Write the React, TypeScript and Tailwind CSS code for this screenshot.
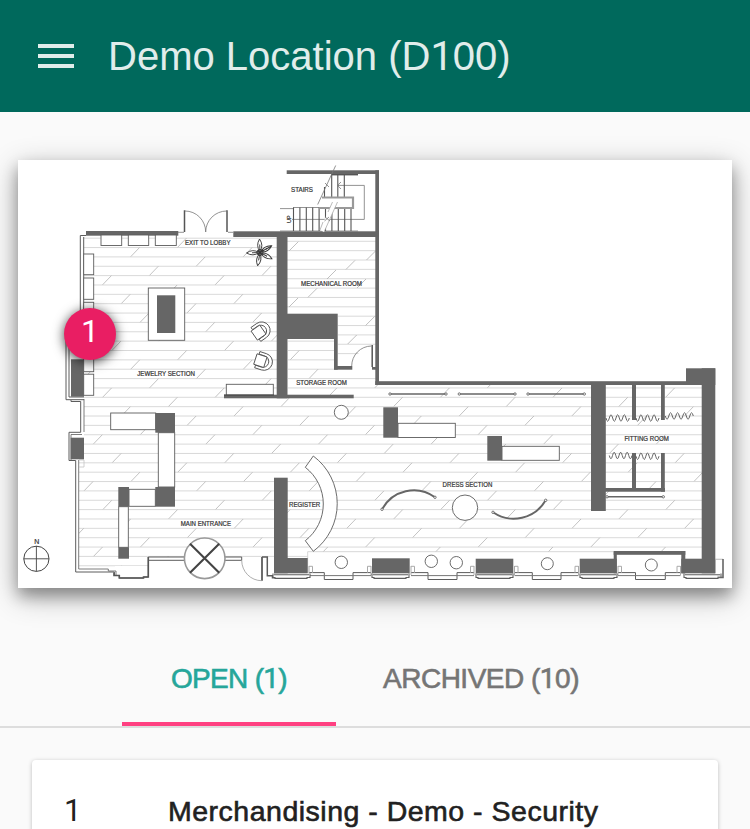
import React from "react";

const WALL = "#666666";
const LINE = "#5c5c5c";

type Box = [number, number, number, number];

// x1, y1, x2, y2
const walls: Box[] = [
  [86, 231, 178.3, 235.7],
  [286.7, 170.3, 379, 174],
  [375.3, 170.3, 379, 385],
  [233.3, 231.3, 379, 237],
  [276.7, 237, 287.5, 398.3],
  [287, 313.7, 337.7, 339],
  [334, 339, 337.7, 369.7],
  [334, 366, 352.3, 369.7],
  [372, 367, 376, 369.7],
  [224, 394.7, 353.7, 398.3],
  [375.3, 381.2, 687, 385],
  [686, 368.3, 715.3, 385],
  [701.7, 368.3, 715.3, 573.3],
  [681.3, 558.7, 715.3, 573.3],
  [613.7, 551, 685.3, 554.8],
  [613.7, 551, 616.8, 573.3],
  [681.3, 551, 685.3, 573.3],
  [579.7, 558.7, 616.7, 573.3],
  [591, 384, 605.8, 511],
  [632, 384, 636, 420],
  [661, 384, 664.8, 420],
  [632, 453, 636, 489],
  [661, 453, 664.8, 491.7],
  [605, 488, 665, 491.7],
  [274, 477.7, 287.7, 573.3],
  [274, 558, 307.7, 573.3],
  [372, 558.3, 409.7, 573.3],
  [475.7, 558.7, 513.3, 573.5],
  [71, 359.3, 84, 396.7],
  [70.7, 437.7, 84, 459.3],
];

const furniture: Box[] = [
  [101, 235, 121.7, 245.5],
  [128.3, 235, 148.7, 245.5],
  [155.3, 235, 176.3, 245.5],
  [83.7, 254, 93.7, 274.7],
  [83.7, 278, 93.7, 299.3],
  [83.7, 302.3, 93.7, 323],
  [83.7, 350, 93.7, 371.7],
  [83.7, 374.2, 93.7, 395.3],
  [148.3, 288, 184.7, 340.3],
  [226.3, 384.3, 273.3, 395],
  [110.7, 413, 155.7, 429.7],
  [158.3, 432.7, 174.7, 487],
  [129, 489.3, 155.3, 506.3],
  [118.7, 506.7, 128.3, 547.3],
  [398, 423.3, 455.3, 437.5],
  [502, 446.3, 559.3, 460.3],
];

const blocks: Box[] = [
  [157, 295.3, 175.3, 333],
  [155.3, 413, 175, 432.7],
  [155.3, 487, 175, 506.7],
  [118.3, 487, 129, 506.7],
  [118.3, 547.3, 129, 558.7],
  [383.3, 407.3, 398, 437.7],
  [487.3, 436, 502, 460.7],
];

const circles: [number, number, number][] = [
  [341.3, 412.3, 7],
  [465, 507.7, 12.7],
  [341.3, 562.3, 6.2],
  [431.3, 561.3, 6.2],
  [456.3, 562.7, 6.2],
  [547.3, 563.7, 6],
  [651.3, 565, 6],
];

const rods: [number, number, number][] = [
  [390, 446, 394],
  [459.3, 515, 394],
  [528, 584.3, 394],
  [607, 663.3, 496.8],
];

// x start, baseline, width, text
const labels: [number, number, number, string][] = [
  [291, 191.7, 22, "STAIRS"],
  [185, 244.6, 45.5, "EXIT TO LOBBY"],
  [301, 285.8, 61, "MECHANICAL ROOM"],
  [137.3, 375.6, 57.7, "JEWELRY SECTION"],
  [296.3, 385, 50.5, "STORAGE ROOM"],
  [180.8, 525.5, 50.2, "MAIN ENTRANCE"],
  [289, 507, 31.3, "REGISTER"],
  [442.6, 487.3, 49.7, "DRESS SECTION"],
  [624.4, 441.4, 44.4, "FITTING ROOM"],
];

const ROW = 9.36;
const rows = Array.from({ length: 36 }, (_, i) => i - 17);

function slashStart(row: number) {
  const period = 112.6;
  const x = 168.3 - row * 46.9;
  return ((x % period) + period) % period;
}

function Rects({ items, fill }: { items: Box[]; fill: string }) {
  return (
    <>
      {items.map(([a, b, c, d], i) => (
        <rect key={i} x={a} y={b} width={c - a} height={d - b} fill={fill} />
      ))}
    </>
  );
}

function wave(x1: number, x2: number, y: number, n: number) {
  const s = (x2 - x1) / n;
  let d = `M${x1} ${y - 1.5}`;
  for (let i = 0; i < n; i++) {
    const dy = i % 2 ? -6.5 : 6.5;
    d += ` q${s / 2} ${dy} ${s} 0`;
  }
  return d;
}

function Chair({ x, y, turn }: { x: number; y: number; turn: number }) {
  return (
    <g transform={`translate(${x} ${y}) rotate(${turn})`} fill="#fff" stroke="#555" strokeWidth={0.9}>
      <path d="M-6 -8.5 H1 A8.5 8.5 0 0 1 1 8.5 H-6 V5.8 H0 A5.8 5.8 0 0 0 0 -5.8 H-6 Z" />
      <rect x={-8} y={-5.5} width={10.5} height={11} />
    </g>
  );
}

function WindowBay({ x1, x2, from, to }: { x1: number; x2: number; from: number; to: number }) {
  return (
    <g fill="none" stroke={LINE} strokeWidth={1}>
      <path d={`M${from} 572.6 H${x1} V579.5 H${x2} V572.6 H${to}`} />
      <path d={`M${from} 575.6 H${to}`} stroke="#777" />
      <path d={`M${from} 566.3 h3.5 v6.5 M${to} 566.3 h-3.5 v6.5`} stroke="#aaa" />
      <path d={`M${from} 566 v9 M${to} 566 v9`} stroke="#aaa" />
    </g>
  );
}

function FloorPlan() {
  return (
    <svg viewBox="18 160 714 428" className="block h-[428px] w-[714px]" aria-label="Floor plan">
      <defs>
        <clipPath id="floor">
          <path d="M84 236 H277 V398 H288 V339 H334 V370 H376 V385 H702 V552 H307.7 V558 H268 V557 H148 V566 H115 V570 H79 V462 H84 Z" />
        </clipPath>
        <clipPath id="mechanical">
          <path d="M287 237 H376 V346 Q354 350 352 366 H338 V314 H287 Z" />
        </clipPath>
      </defs>

      <g clipPath="url(#floor)" strokeWidth={0.8}>
        {rows.map((r) => {
          const y = 397.3 + r * ROW;
          const start = slashStart(r);
          return (
            <g key={r}>
              <path d={`M70 ${y} H705`} stroke="#cfcfcf" />
              {[0, 1, 2, 3, 4, 5, 6].map((k) => (
                <path key={k} d={`M${start + k * 112.6} ${y + ROW} l9 -${ROW}`} stroke="#b4b4b4" />
              ))}
            </g>
          );
        })}
      </g>

      <g clipPath="url(#mechanical)" strokeWidth={0.8}>
        {Array.from({ length: 13 }, (_, i) => (
          <path key={i} d={`M287 ${241.3 + i * ROW} H376`} stroke="#cfcfcf" />
        ))}
        <path
          d="M289.3 250.7 l9 -9 M366.5 260 l9 -9 M346 269.4 l9 -9 M327 279 l9 -9 M357 288 l9 -9 M308 297.3 l9 -9 M289 307 l9 -9 M365.7 325.4 l9 -9 M347.7 344 l9 -9"
          stroke="#b0b0b0"
        />
      </g>

      {/* Exterior outlines */}
      <g fill="none" stroke={LINE} strokeWidth={1}>
        <path d="M86 235.5 H80.3 V350 M83.7 237 V352" />
        <path d="M69 340 V397 H84 M66 340 V399.7 H84 M71 400 V401.5 H80.7 V432.3 H69 V460.5 H75.7 V572 H114.3 V575.5 H119.3 V578 H143.5 V577 H148.3 V557 H184" />
        <path d="M84 399 V432 M71 434.5 H82 M71 434.5 V460 M78.7 460 V569 H108.3 V571 H116 V575" strokeWidth={0.8} />
        <path d="M79 460 H84 V467 H79" stroke="#c4c4c4" strokeWidth={0.8} />
        <path d="M148 560.3 H184 M225 557 H241.7 V560.3 H225" />
        <path d="M262 557 H267.3 V575.7 H272.5 V577.8 H304.5 V575 H310" strokeWidth={1.5} />
        <path d="M262 557 V580.7" strokeWidth={1.8} />
        <path d="M241.7 560.3 A20 20.4 0 0 0 261.7 580.7" stroke="#999" strokeWidth={0.8} />
      </g>
      <path d="M114 572.5 V575.5 H119.3 V578 H143.5 V577 H148.3 V557" fill="none" stroke="#555" strokeWidth={1.6} />
      <path d="M307.7 573 V551.7 H613" fill="none" stroke="#d2d2d2" strokeWidth={0.9} />

      {/* Lower window bays */}
      <WindowBay x1={324.3} x2={353} from={309} to={371} />
      <WindowBay x1={428} x2={457} from={411} to={474} />
      <WindowBay x1={532.3} x2={561} from={514.5} to={578.5} />
      <WindowBay x1={635.5} x2={665.3} from={618} to={680.5} />
      <g fill="#fff" stroke={LINE} strokeWidth={1.1}>
        {[273, 372, 476, 580, 684].map((x) => (
          <path key={x} d={`M${x} 573.5 V577.5 H${x + 2} V578.4 H${x + 34} V577.5 H${x + 37} V573.5 M${x + 1} 574.7 H${x + 36}`} />
        ))}
        <path d="M717 576 H720 M716 559.3 H723" stroke="#bbb" />
      </g>
      <path d="M723 559 V577.5 H718" fill="none" stroke="#666" strokeWidth={1.6} />

      <Rects items={walls} fill={WALL} />
      <g fill="#fff" stroke={LINE} strokeWidth={0.9}>
        {furniture.map(([a, b, c, d], i) => (
          <rect key={i} x={a} y={b} width={c - a} height={d - b} />
        ))}
      </g>
      <Rects items={blocks} fill={WALL} />
      <path d="M224 395 H274" stroke="#444" strokeWidth={1} />

      {/* Register counter */}
      <path
        d="M313.3 456 L305.3 467.3 A46.4 46.4 0 0 1 305.3 540.7 L313.3 551.3 A59.4 59.4 0 0 0 313.3 456 Z"
        fill="#fff"
        stroke={LINE}
        strokeWidth={0.9}
      />

      <g fill="#fff" stroke={LINE} strokeWidth={0.9}>
        {circles.map(([x, y, r]) => (
          <circle key={x + y} cx={x} cy={y} r={r} />
        ))}
      </g>

      {/* Clothing rods */}
      {rods.map(([a, b, y]) => (
        <g key={a}>
          <path d={`M${a} ${y} H${b}`} stroke="#666" strokeWidth={1.6} />
          <circle cx={a} cy={y} r={1.2} fill="#fff" stroke="#555" strokeWidth={0.8} />
          <circle cx={b} cy={y} r={1.2} fill="#fff" stroke="#555" strokeWidth={0.8} />
        </g>
      ))}
      <g fill="none" stroke="#666" strokeWidth={1.9}>
        <path d="M382 509.3 A36 36 0 0 1 435 497.3" />
        <path d="M493 512.3 A37 37 0 0 0 545.7 500.3" />
      </g>
      <g fill="#fff" stroke="#555" strokeWidth={0.8}>
        <circle cx={382} cy={509.3} r={1.2} />
        <circle cx={435} cy={497.3} r={1.2} />
        <circle cx={493} cy={512.3} r={1.2} />
        <circle cx={545.7} cy={500.3} r={1.2} />
      </g>

      {/* Fitting room curtains */}
      <g fill="none" stroke="#555" strokeWidth={0.9}>
        <path d={wave(606, 629.3, 419.5, 7)} />
        <path d={wave(636, 659, 419.5, 7)} />
        <path d={wave(665.3, 693.3, 417.5, 8)} />
        <path d={wave(609.3, 632, 457, 7)} />
        <path d={wave(636, 659, 457.7, 7)} />
      </g>

      {/* Lobby and mechanical doors */}
      <g fill="none" stroke="#777" strokeWidth={0.8}>
        <path d="M185 211 A20.7 21 0 0 1 205.7 232 A21 21 0 0 1 226.7 211" />
        <path d="M178 232.3 H184 M228 232.3 H233" />
        <path d="M351.7 366 A20 20 0 0 1 371.3 346" />
      </g>
      <path d="M184.5 210.3 V232 M227 210.3 V232 M372.2 345 V367" stroke="#555" strokeWidth={1.5} />

      {/* Stairs */}
      <g fill="none" stroke="#777" strokeWidth={0.8}>
        <path d="M280 208.6 H293.3 M293 207.5 H352 M292 219.4 H364.3 V185.4 H338 M280 231 H358" />
        <path d="M293.5 207.5 V231 M299.9 207.5 V231 M306.3 207.5 V231 M312.7 207.5 V231 M319.1 207.5 V231 M325.5 207.5 V231 M331.9 207.5 V231 M338.3 207.5 V231 M344.7 207.5 V231 M351 207.5 V231" stroke="#555" strokeWidth={1.1} />
        <path d="M324.5 187 V197 M331.7 175 V197 M337.8 174 V197 M344.3 174 V197" stroke="#555" strokeWidth={1.1} />
        <path d="M331 174.7 H358" stroke="#555" strokeWidth={1.4} />
        <path d="M341 182 L337.5 185.4 L341 189" />
        <path d="M322 197.5 H353 V208 H319" stroke="#999" strokeWidth={2.2} />
        <path d="M335.7 165.5 L317.7 204.5" />
        <path d="M325 183 L329 187" />
        <path d="M335 202 L322 231" stroke="#fff" strokeWidth={4.5} />
        <path d="M332.5 202 L328 212 M323 222 L320 230 M337.5 202 L324.5 231" stroke="#aaa" />
        <path d="M325 217 L330 221 M324.5 221 L329 217" />
      </g>

      {/* Potted plant */}
      <g transform="translate(260 252.5)" fill="#fff" stroke="#333" strokeWidth={0.9}>
        {[-92, -30, 28, 100, 178].map((a) => (
          <g key={a} transform={`rotate(${a})`}>
            <path d="M1 0 Q7 -4.2 13.5 0 Q7 4.2 1 0 Z M2 0 H8" />
          </g>
        ))}
        <circle r={3} fill="#666" />
        <path d="M-2 -2 L2 2 M2 -2 L-2 2 M6 -3.5 L11 -6" strokeWidth={1.2} />
      </g>

      <Chair x={260.8} y={331} turn={-35} />
      <Chair x={263} y={361.5} turn={18} />

      {/* Revolving door */}
      <circle cx={204.7} cy={558.3} r={20.3} fill="#fff" stroke="#999" strokeWidth={1.6} />
      <path d="M190 543.8 L219.2 572.8 M219.2 543.8 L190 572.8" stroke="#444" strokeWidth={2.1} />

      {/* Compass */}
      <circle cx={36.4} cy={558.8} r={12.6} fill="none" stroke="#444" strokeWidth={1} />
      <path d="M36.4 546 V571.5 M23.7 558.8 H49" stroke="#444" strokeWidth={0.9} />

      <g fontFamily="Liberation Sans, Arial, sans-serif" fontSize={6.3} fill="#333" stroke="#333" strokeWidth={0.2}>
        {labels.map(([x, y, w, t]) => (
          <text key={t} x={x} y={y} textLength={w} lengthAdjust="spacingAndGlyphs">
            {t}
          </text>
        ))}
        <text x={34.2} y={544} fontSize={7}>N</text>
        <text transform="translate(290.6 223) rotate(-90)" fontSize={5.5}>UP</text>
      </g>
    </svg>
  );
}

function One() {
  return <span className="font-['Roboto',sans-serif]">1</span>;
}

export default function App() {
  return (
    <div className="flex h-[829px] w-[750px] flex-col overflow-hidden bg-[#fafafa] font-['Liberation_Sans',Arial,sans-serif]">
      <header className="flex h-28 shrink-0 items-center bg-[#00695c] pl-[38px]">
        <button className="flex w-9 flex-col gap-1.5" aria-label="Menu">
          <span className="h-1 w-full bg-[#e0edeb]" />
          <span className="h-1 w-full bg-[#e0edeb]" />
          <span className="h-1 w-full bg-[#e0edeb]" />
        </button>
        <h1 className="ml-[34px] text-[40px] leading-[56px] text-[#e0edeb]">
          Demo Location (D<One />00)
        </h1>
      </header>

      <main className="flex flex-1 flex-col">
        <section className="relative mx-[18px] mt-12 h-[428px] shrink-0 bg-white shadow-[0_8px_14px_rgba(0,0,0,0.3),0_8px_28px_rgba(0,0,0,0.3)]">
          <FloorPlan />
          <span className="absolute left-[46px] top-[148px] flex size-[52px] items-center justify-center rounded-full bg-[#e91e63] pb-[6px] text-[32px] leading-none text-white shadow-[0_2px_12px_rgba(0,0,0,0.75)]">
            <One />
          </span>
        </section>

        <nav className="mt-[42px] flex h-[98px] shrink-0 justify-center border-b-2 border-[#dddddd] text-[28px]">
          <a className="flex w-[214px] items-center justify-center border-b-4 border-[#ff4081] pt-1.5 text-[#26a69a] [-webkit-text-stroke:0.6px_#26a69a]">
            <span className="tracking-[-0.7px]">
              OPEN (<One />)
            </span>
          </a>
          <a className="flex w-[292px] items-center justify-center border-b-4 border-transparent pt-1.5 pr-0.5 text-[#757575] [-webkit-text-stroke:0.6px_#757575]">
            <span className="tracking-[-0.5px]">
              ARCHIVED (<One />0)
            </span>
          </a>
        </nav>

        <article className="mx-8 mt-8 flex h-32 shrink-0 rounded bg-white px-8 pt-8 text-[28px] text-[#212121] shadow-[0_1px_4px_rgba(0,0,0,0.25)]">
          <span className="w-[104px] pt-[3px] text-[31px] leading-[31px]">
            <One />
          </span>
          <h2 className="text-[28.5px] leading-[38px] tracking-[0.5px] [-webkit-text-stroke:0.6px_#212121]">
            Merchandising - Demo - Security
          </h2>
        </article>
      </main>
    </div>
  );
}
